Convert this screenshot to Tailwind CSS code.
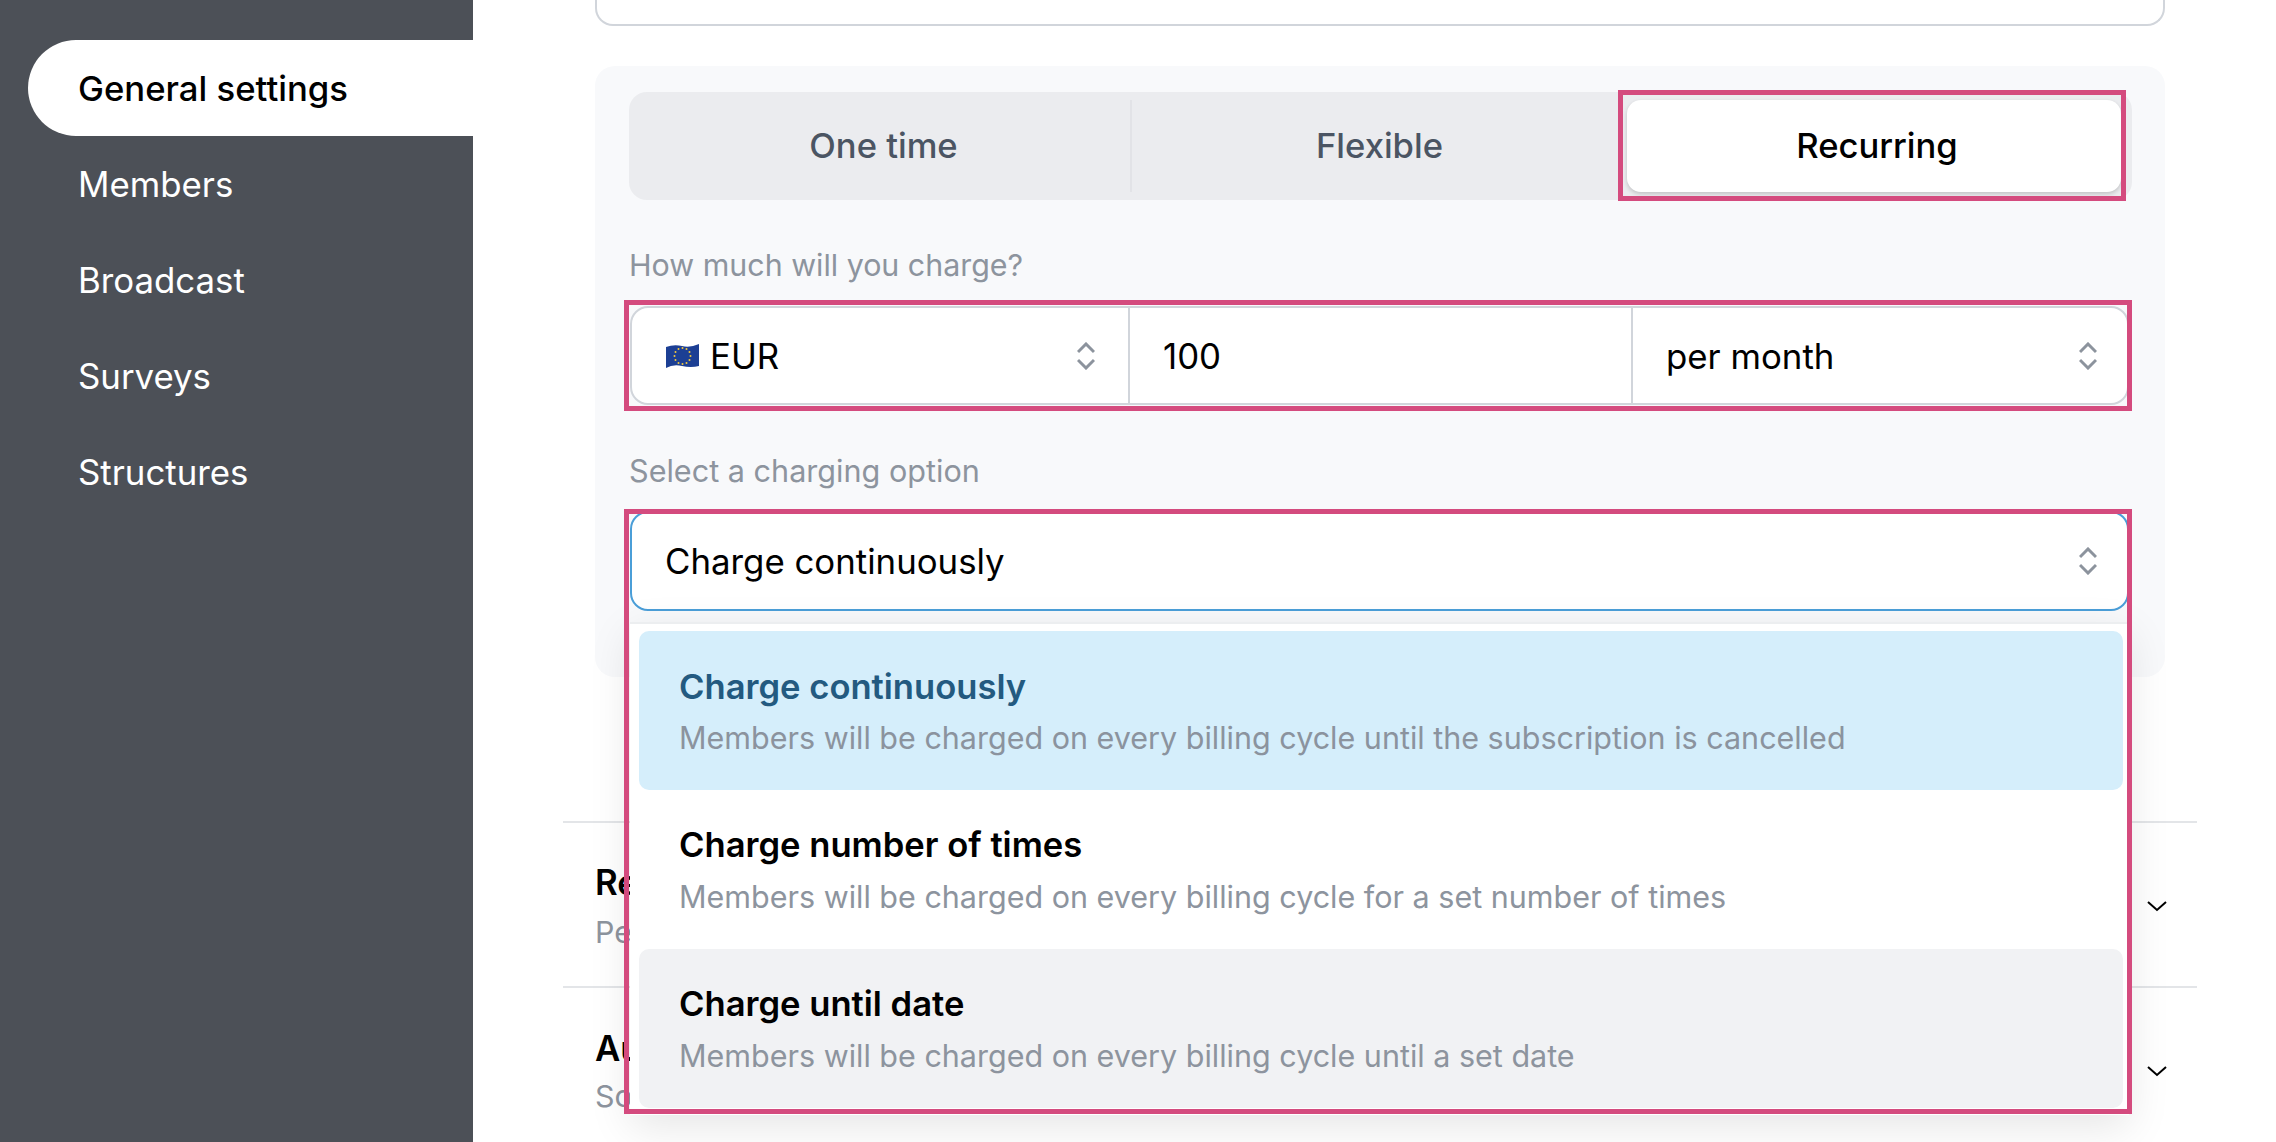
<!DOCTYPE html>
<html lang="en">
<head>
  <meta charset="UTF-8">
  <title>Pricing settings</title>
  <script src="https://cdn.jsdelivr.net/npm/@tailwindcss/browser@4"></script>
</head>
<body class="bg-white font-['Inter',sans-serif] text-[34.8px] text-black">
<div class="flex h-[1142px] w-[2276px] overflow-hidden">

  <!-- sidebar -->
  <nav class="w-[473px] shrink-0 bg-[#4c5057] pt-[40px] pl-[28px] text-white">
    <a class="flex h-[96px] items-center rounded-l-[48px] bg-white pl-[50px] text-[34.7px] font-medium text-black">General settings</a>
    <a class="flex h-[96px] items-center pl-[50px]">Members</a>
    <a class="flex h-[96px] items-center pl-[50px]">Broadcast</a>
    <a class="flex h-[96px] items-center pl-[50px]">Surveys</a>
    <a class="flex h-[96px] items-center pl-[50px]">Structures</a>
  </nav>

  <main class="ml-[122px] w-[1570px] shrink-0">
    <div class="h-[26px] rounded-b-[18px] border-2 border-t-0 border-[#d1d5db]"></div>

    <!-- pricing panel -->
    <section class="mt-[40px] h-[611px] rounded-[20px] bg-[#f8f9fb] pt-[26px] pl-[34px] pr-[33px]">
      <div class="flex h-[108px] rounded-[18px] bg-[#ebecef] py-2 pl-2 pr-[11px] text-[34.6px] font-medium text-[#4b5563]">
        <div class="flex w-[495px] items-center justify-center border-r-2 border-[#e2e3e7]">One time</div>
        <div class="flex w-[495px] items-center justify-center">Flexible</div>
        <div class="relative flex flex-1 items-center justify-center rounded-[14px] bg-white pl-[6px] text-black shadow-[0_2px_4px_rgba(0,0,0,0.18)]">
          Recurring
          <div class="absolute -top-[10px] -left-[9px] -right-[5px] -bottom-[9px] border-[5px] border-[#d44b7e]"></div>
        </div>
      </div>

      <label class="mt-[43px] block h-[44px] text-[30.4px] leading-[44px] text-[#8d949e]">How much will you charge?</label>
      <div class="relative mt-[19px] ml-px mr-[3px]">
        <div class="flex h-[99px] items-stretch rounded-[18px] border-2 border-[#d1d5db] bg-white">
          <div class="flex w-[498px] items-center border-r-2 border-[#d1d5db] pl-[34px] pr-[33px]">
            <svg class="mr-[11px] h-[24px] w-[33px]" viewBox="0 0 33 24">
              <path d="M0 3 Q8 0 16 2 T33 0 V22 Q25 24 16 22 T0 24 Z" fill="#1c3f94"/>
              <g fill="#f2c83c">
                <circle cx="16.5" cy="4" r="1"/><circle cx="20.5" cy="5" r="1"/><circle cx="23.5" cy="8" r="1"/>
                <circle cx="24.5" cy="12" r="1"/><circle cx="23.5" cy="16" r="1"/><circle cx="20.5" cy="19" r="1"/>
                <circle cx="16.5" cy="20" r="1"/><circle cx="12.5" cy="19" r="1"/><circle cx="9.5" cy="16" r="1"/>
                <circle cx="8.5" cy="12" r="1"/><circle cx="9.5" cy="8" r="1"/><circle cx="12.5" cy="5" r="1"/>
              </g>
            </svg>
            <span class="flex-1 pt-[2px]">EUR</span>
            <svg class="h-[28px] w-[18px]" viewBox="0 0 18 28" fill="none" stroke="#8c939d" stroke-width="3"><path d="M1 10 9 2l8 8M1 18l8 8 8-8"/></svg>
          </div>
          <div class="flex w-[503px] items-center border-r-2 border-[#d1d5db] pl-[33px]"><span class="pt-[2px]">100</span></div>
          <div class="flex flex-1 items-center pl-[33px] pr-[30px]">
            <span class="flex-1 pt-[2px]">per month</span>
            <svg class="h-[28px] w-[18px]" viewBox="0 0 18 28" fill="none" stroke="#8c939d" stroke-width="3"><path d="M1 10 9 2l8 8M1 18l8 8 8-8"/></svg>
          </div>
        </div>
        <div class="absolute -top-[6px] -left-[6px] -right-[3px] -bottom-[6px] border-[5px] border-[#d44b7e]"></div>
      </div>

      <label class="mt-[44px] block h-[44px] text-[30.6px] leading-[44px] text-[#8d949e]">Select a charging option</label>
      <div class="relative z-10 mt-[18px] ml-px mr-[3px]">
        <div class="flex h-[100px] items-center rounded-[18px] border-2 border-[#4a9ed8] bg-white pl-[33px] pr-[30px]">
          <span class="flex-1">Charge continuously</span>
          <svg class="h-[28px] w-[18px]" viewBox="0 0 18 28" fill="none" stroke="#8c939d" stroke-width="3"><path d="M1 10 9 2l8 8M1 18l8 8 8-8"/></svg>
        </div>

        <!-- options menu -->
        <ul class="absolute top-[111px] left-0 right-0 border-t-2 border-[#eceef0] bg-white pl-[9px] pr-[6px] pt-[7px] pb-[7px] text-[34.6px] shadow-[0_12px_40px_rgba(0,0,0,0.1)]">
          <li class="h-[159px] rounded-[10px] bg-[#d5eefb] pl-[40px] pt-[33px]">
            <div class="h-[44px] font-semibold leading-[44px] text-[#235a80]">Charge continuously</div>
            <div class="mt-[8px] h-[44px] text-[30.5px] leading-[44px] text-[#8b939e]">Members will be charged on every billing cycle until the subscription is cancelled</div>
          </li>
          <li class="h-[159px] pl-[40px] pt-[32px]">
            <div class="h-[44px] font-semibold leading-[44px]">Charge number of times</div>
            <div class="mt-[9px] h-[44px] text-[30.5px] leading-[44px] text-[#8d949e]">Members will be charged on every billing cycle for a set number of times</div>
          </li>
          <li class="h-[159px] rounded-[10px] bg-[#f1f2f4] pl-[40px] pt-[32px]">
            <div class="h-[44px] font-semibold leading-[44px]">Charge until date</div>
            <div class="mt-[9px] h-[44px] text-[30.5px] leading-[44px] text-[#8d949e]">Members will be charged on every billing cycle until a set date</div>
          </li>
        </ul>
        <div class="absolute -top-[2px] -left-[6px] -right-[3px] -bottom-[503px] border-[5px] border-[#d44b7e]"></div>
      </div>
    </section>

    <!-- rows behind the menu -->
    <div class="mt-[144px] -mx-[32px]">
      <div class="flex h-[165px] items-center border-t-2 border-[#e3e5e8] pl-[32px] pr-[30px]">
        <div class="flex-1 pt-[4px]">
          <div class="h-[44px] font-semibold leading-[44px]">Re</div>
          <div class="mt-[6px] h-[44px] text-[30.4px] leading-[44px] text-[#8d949e]">Pe</div>
        </div>
        <svg class="mt-[2px] h-[12px] w-[20px]" viewBox="0 0 20 12" fill="none" stroke="#000" stroke-width="2"><path d="m1 2 9 8 9-8"/></svg>
      </div>
      <div class="flex h-[165px] items-center border-t-2 border-[#e3e5e8] pl-[32px] pr-[30px]">
        <div class="flex-1 pt-[4px]">
          <div class="h-[44px] font-semibold leading-[44px]">Au</div>
          <div class="mt-[4px] h-[44px] text-[30.4px] leading-[44px] text-[#8d949e]">So</div>
        </div>
        <svg class="mt-[2px] h-[12px] w-[20px]" viewBox="0 0 20 12" fill="none" stroke="#000" stroke-width="2"><path d="m1 2 9 8 9-8"/></svg>
      </div>
    </div>
  </main>
</div>
</body>
</html>
